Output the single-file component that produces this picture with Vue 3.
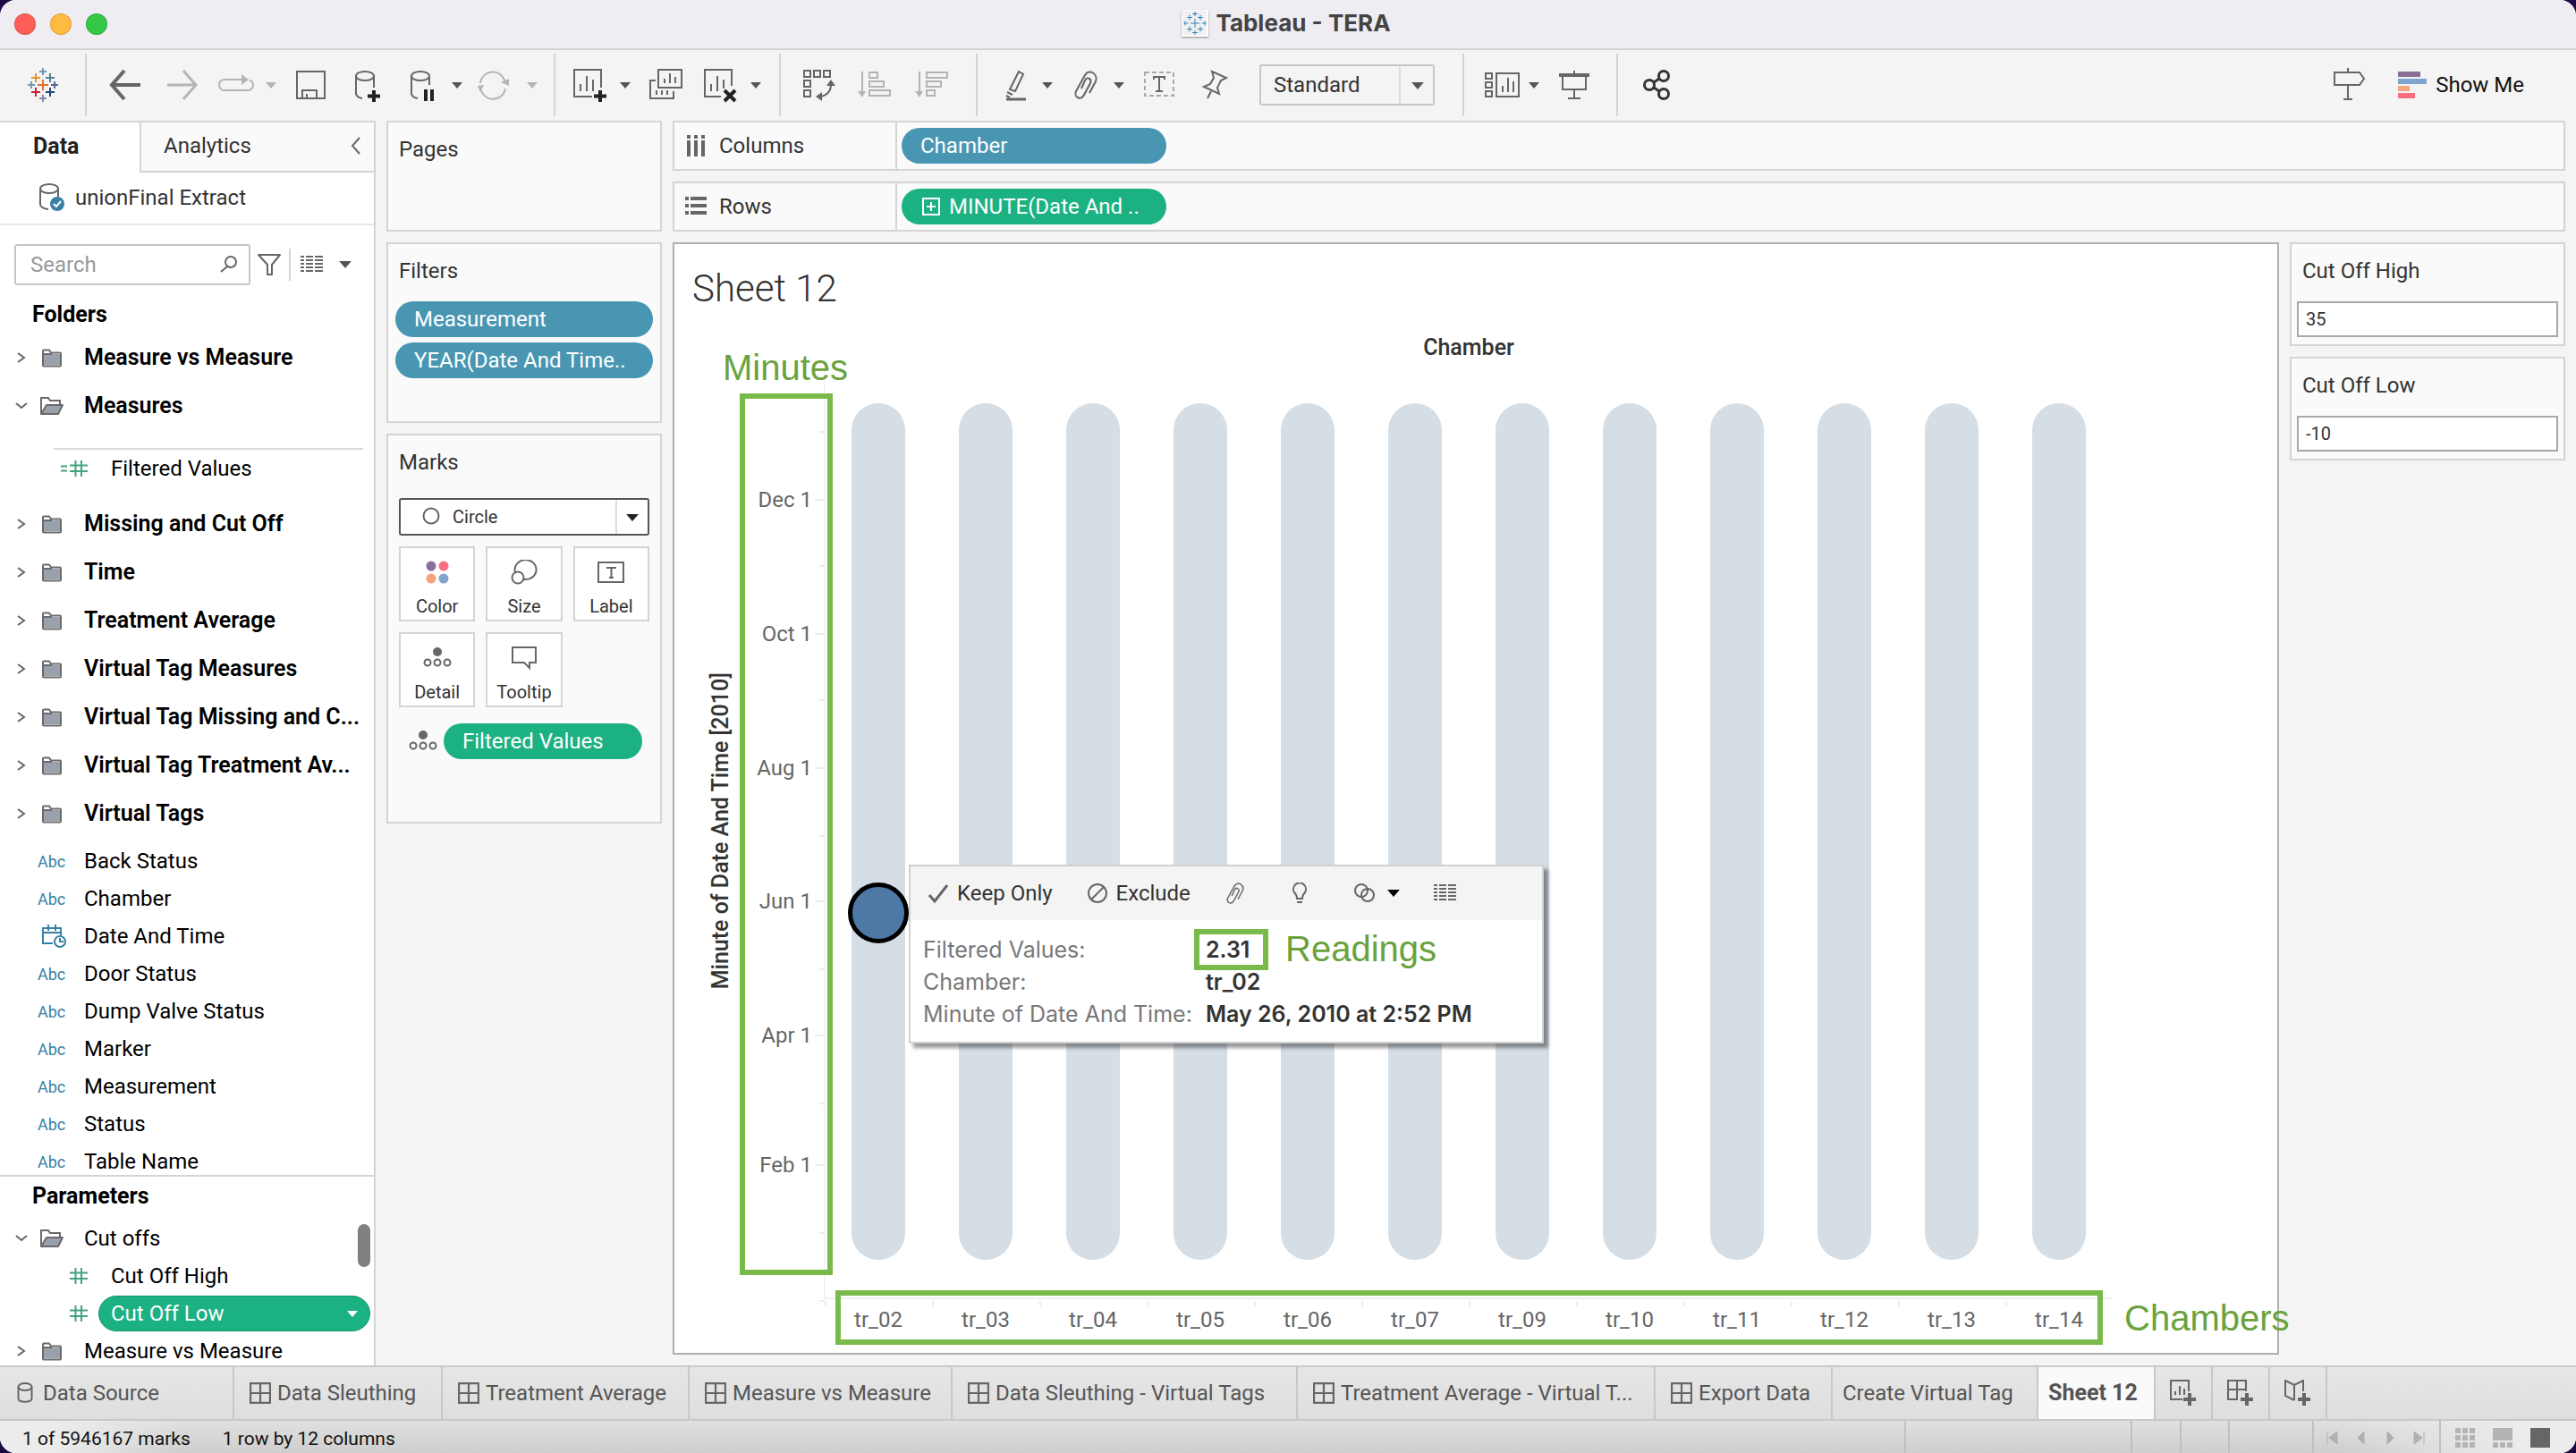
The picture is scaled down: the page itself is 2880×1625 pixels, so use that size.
<script setup>
import { ref } from 'vue'

const folders = [
  { name: 'Missing and Cut Off' },
  { name: 'Time' },
  { name: 'Treatment Average' },
  { name: 'Virtual Tag Measures' },
  { name: 'Virtual Tag Missing and C...' },
  { name: 'Virtual Tag Treatment Av...' },
  { name: 'Virtual Tags' },
]
const fields = [
  { name: 'Back Status', type: 'abc' },
  { name: 'Chamber', type: 'abc' },
  { name: 'Date And Time', type: 'date' },
  { name: 'Door Status', type: 'abc' },
  { name: 'Dump Valve Status', type: 'abc' },
  { name: 'Marker', type: 'abc' },
  { name: 'Measurement', type: 'abc' },
  { name: 'Status', type: 'abc' },
  { name: 'Table Name', type: 'abc' },
]
const chambers = ['tr_02', 'tr_03', 'tr_04', 'tr_05', 'tr_06', 'tr_07', 'tr_09', 'tr_10', 'tr_11', 'tr_12', 'tr_13', 'tr_14']

// Day of the year for every month tick; alternate months carry a label.
const ticks = [
  { day: 365 }, { day: 334, label: 'Dec 1' }, { day: 304 }, { day: 273, label: 'Oct 1' },
  { day: 243 }, { day: 212, label: 'Aug 1' }, { day: 181 }, { day: 151, label: 'Jun 1' },
  { day: 120 }, { day: 90, label: 'Apr 1' }, { day: 59 }, { day: 31, label: 'Feb 1' },
  { day: 0 }, { day: -31 },
]
const axisStart = -31
const axisSpan = 427
const tickTop = (day) => `${(1 - (day - axisStart) / axisSpan) * 100}%`

const tabs = ['Data Sleuthing', 'Treatment Average', 'Measure vs Measure', 'Data Sleuthing - Virtual Tags', 'Treatment Average - Virtual T...', 'Export Data']
const fit = ref('Standard')
const markType = ref('Circle')
const search = ref('')
const cutHigh = ref('35')
const cutLow = ref('-10')

const logoMarks = [
  [20, 20, 6, '#eb6f2c'], [20, 5, 4, '#6f9bb0'], [20, 35, 4, '#8088b0'], [7, 20, 4, '#6f9bb0'], [33, 20, 4, '#5b6591'],
  [12, 12, 5, '#e8912d'], [28, 12, 5, '#4f8498'], [12, 28, 5, '#c72037'], [28, 28, 5, '#1f457e'],
]
</script>

<template>
  <div class="window">
    <svg class="defs" width="0" height="0" aria-hidden="true">
      <symbol id="i-sheet" viewBox="0 0 22 22"><path d="M1 1h20v20H1zM11 1v20M1 11h20" fill="none" stroke="#666" stroke-width="2" /></symbol>
      <symbol id="i-folder" viewBox="0 0 24 22"><path d="M2 7h20v12H2z" fill="#98a1ac" /><path d="M2 19.500V3.500q0-1 1-1h6l2 3h10q1 0 1 1v13q0 1-1 1H3q-1 0-1-1zM2 7h10" fill="none" stroke="#6a6a6a" stroke-width="2" stroke-linejoin="round" /></symbol>
      <symbol id="i-open" viewBox="0 0 28 22"><path d="M2 20V2h8l2 3h11v5" fill="none" stroke="#6a6a6a" stroke-width="2" /><path d="M2 20l6-10h18l-5 10z" fill="#98a1ac" stroke="#6a6a6a" stroke-width="2" stroke-linejoin="round" /></symbol>
      <symbol id="i-right" viewBox="0 0 12 14"><path d="M2 2l7 5-7 5" fill="none" stroke="#666" stroke-width="2" /></symbol>
      <symbol id="i-down" viewBox="0 0 14 10"><path d="M1 2l6 5 6-5" fill="none" stroke="#666" stroke-width="2" /></symbol>
      <symbol id="i-hash" viewBox="0 0 20 20"><path d="M6.500 1v18M13 1v18M0 6.500h20M0 13h20" fill="none" stroke="#42a37c" stroke-width="2" /></symbol>
      <symbol id="i-caret" viewBox="0 0 12 7"><path d="M0 0h12L6 7z" fill="currentColor" /></symbol>
      <symbol id="i-detail" viewBox="0 0 32 24"><circle cx="16" cy="5" r="5" fill="#666" /><g fill="none" stroke="#666" stroke-width="2"><circle cx="5" cy="17" r="3.500" /><circle cx="16" cy="17" r="3.500" /><circle cx="27" cy="17" r="3.500" /></g></symbol>
      <symbol id="i-list" viewBox="0 0 26 20"><g stroke="#666" stroke-width="2"><path v-for="y in [1, 5, 9, 13, 17]" :key="y" :d="`M0 ${y}h4M6 ${y}h8M16 ${y}h9`" /></g></symbol>
      <symbol id="i-clip" viewBox="0 0 40 40"><path d="M24 29l7-13c3-8-7-15-12-7L9 27c-3 7 6 11 9 4l7-13c2-5-4-8-6-3l-4 9" fill="none" stroke="#666" stroke-width="2" /></symbol>
    </svg>

    <header class="titlebar">
      <div class="lights"><button class="red" aria-label="Close"></button><button class="amber" aria-label="Minimise"></button><button class="green" aria-label="Zoom"></button></div>
      <svg class="doc" viewBox="0 0 30 30"><path d="M0 0h30v30H0z" fill="#fff" /><path d="M1 1h27v27H1z" fill="#f1f1f1" /><path d="M15 10v10M10 15h10M15 2v5M12 4.500h6M15 23v5M12 25.500h6M2.500 15h5M4 12.500v5M22.500 15h5M26 12.500v5M9 5.500v6M6 8.500h6M21 5.500v6M18 8.500h6M9 18.500v6M6 21.500h6M21 18.500v6M18 21.500h6" stroke="#2f86bd" fill="none" /></svg>
      <h1>Tableau - TERA</h1>
    </header>

    <nav class="toolbar">
      <div class="group brand"><button class="tool" aria-label="Start page"><svg viewBox="0 0 40 40"><path v-for="(m, i) in logoMarks" :key="i" :d="`M${m[0] - m[2]} ${m[1]}h${m[2] * 2}M${m[0]} ${m[1] - m[2]}v${m[2] * 2}`" :stroke="m[3]" stroke-width="2" /></svg></button></div>

      <div class="group">
        <button class="tool" aria-label="Undo"><svg viewBox="0 0 40 40"><path d="M37 20H5M19 4L5 20l14 16" stroke-width="4" /></svg></button>
        <button class="tool dim" aria-label="Redo"><svg viewBox="0 0 40 40"><path d="M5 20h32M23 4l14 16-14 16" stroke-width="3" /></svg></button>
        <button class="tool dim" aria-label="Replay"><svg viewBox="0 0 40 40"><path d="M27 14H8a6 6 0 0 0-7 6a6 6 0 0 0 7 6h24a6 6 0 0 0 7-6q0-4-4-5" /><path class="solid" d="M26 8l8 6-8 6z" /></svg></button>
        <button class="caret dim" aria-label="Replay options"><svg><use href="#i-caret" /></svg></button>
        <button class="tool" aria-label="Save"><svg viewBox="0 0 40 40"><path d="M4 5h31v30H4zM10 35v-9h16v9M15 35v-5" /></svg></button>
        <button class="tool" aria-label="New data source"><svg viewBox="0 0 40 40"><ellipse cx="18" cy="10" rx="10" ry="5" /><path d="M8 10v20q1 4 7 5M28 10v13" /><path class="ink" d="M28 26v13M21 32.500h14" /></svg></button>
        <button class="tool" aria-label="Pause updates"><svg viewBox="0 0 40 40"><ellipse cx="18" cy="10" rx="10" ry="5" /><path d="M8 10v20q1 4 7 5M28 10v10" /><path class="ink" d="M24 25v13M31 25v13" /></svg></button>
        <button class="caret" aria-label="Pause options"><svg><use href="#i-caret" /></svg></button>
        <button class="tool dim" aria-label="Refresh"><svg viewBox="0 0 40 40"><path d="M1 18a14 14 0 0 1 25-7l3 5M29 24a14 14 0 0 1-25 6l-3-5" /><path class="solid" d="M24 17l9-4v8zM-2 21l7-1-4 8z" /></svg></button>
        <button class="caret dim" aria-label="Refresh options"><svg><use href="#i-caret" /></svg></button>
      </div>

      <div class="group near">
        <button class="tool" aria-label="New worksheet"><svg viewBox="0 0 40 40"><path d="M22 33H2V3h30v20M9 27v-8M16 27V10M23 27V14" /><path class="ink" d="M31 26v13M24 32.500h14" /></svg></button>
        <button class="caret" aria-label="New worksheet options"><svg><use href="#i-caret" /></svg></button>
        <button class="tool" aria-label="Duplicate"><svg viewBox="0 0 40 40"><path d="M12 3h26v20H12zM19 18v-5M25 18V7M31 18v-7M9 15H3v20h26v-8M10 26v5M16 26v5M22 26v5" /></svg></button>
        <button class="tool" aria-label="Clear sheet"><svg viewBox="0 0 40 40"><path d="M20 33H2V3h30v18M9 27v-8M16 27V10M23 24V14" /><path class="ink" d="M24 26l12 12M36 26L24 38" /></svg></button>
        <button class="caret" aria-label="Clear options"><svg><use href="#i-caret" /></svg></button>
      </div>

      <div class="group">
        <button class="tool" aria-label="Swap rows and columns"><svg viewBox="0 0 40 40"><path d="M3 4h7v7H3zM14 4h7v7h-7zM25 4h7v7h-7zM3 15h7v7H3zM3 26h7v7H3zM33 19q0 12-12 14" /><path class="solid" d="M28 21l5-7 5 7zM23 28v10l-7-5z" /></svg></button>
        <button class="tool dim" aria-label="Sort ascending"><svg viewBox="0 0 40 40"><path d="M6 5v24M14 6h9v6h-9zM14 16h16v6H14zM14 26h23v6H14z" /><path class="solid" d="M1 27h9l-4 7z" /></svg></button>
        <button class="tool dim" aria-label="Sort descending"><svg viewBox="0 0 40 40"><path d="M8 5v24M16 6h23v6H16zM16 16h16v6H16zM16 26h9v6h-9z" /><path class="solid" d="M3 27h9l-4 7z" /></svg></button>
      </div>

      <div class="group tight">
        <button class="tool" aria-label="Highlight"><svg viewBox="0 0 40 40"><path d="M23 5l5 3-9 19-6-2zM10 28l6 3M9 32l4 2" /><path d="M9 36h22" stroke-width="3" /></svg></button>
        <button class="caret" aria-label="Highlight options"><svg><use href="#i-caret" /></svg></button>
        <button class="tool" aria-label="Group members"><svg viewBox="2 0 40 40"><use href="#i-clip" width="40" height="40" /></svg></button>
        <button class="caret" aria-label="Group options"><svg><use href="#i-caret" /></svg></button>
        <button class="tool" aria-label="Show mark labels"><svg viewBox="0 0 40 40"><path d="M4 6h32v26H4z" stroke-dasharray="5 3" stroke="#aaa" /><path d="M14 14v-3h12v3M20 11v16M16 27h8" /></svg></button>
        <button class="tool" aria-label="Fix axes"><svg viewBox="-4 0 40 40"><path d="M16 5l16 7-6 3-4 8 2 7L7 22l7-3 4-7zM15 27l-4 8" /></svg></button>
        <div class="fit"><select v-model="fit" aria-label="Fit"><option>Standard</option></select><svg><use href="#i-caret" /></svg></div>
      </div>

      <div class="group tight">
        <button class="tool" aria-label="Show cards"><svg viewBox="0 0 40 40"><path d="M1 7h7v6H1zM1 17h7v6H1zM1 27h7v6H1zM13 7h25v26H13zM20 28v-7M26 28V12M32 28V16" /></svg></button>
        <button class="caret" aria-label="Card options"><svg><use href="#i-caret" /></svg></button>
        <button class="tool" aria-label="Presentation mode"><svg viewBox="0 0 40 40"><path d="M7 10v15h26V10M20 4v4M20 25v10M13 35h14" /><path d="M3 9h34" stroke-width="4" /></svg></button>
      </div>

      <div class="group">
        <button class="tool" aria-label="Share"><svg class="dark" viewBox="0 0 40 40"><circle cx="12" cy="20" r="5.500" /><circle cx="28" cy="10" r="5.500" /><circle cx="28" cy="30" r="5.500" /><path d="M17 17l6-4M17 23l6 4" /></svg></button>
      </div>

      <div class="help">
        <button class="tool" aria-label="Guide"><svg viewBox="0 0 40 40"><path d="M3 6h28l5 7-5 7H3zM18 1v5M18 20v16M13 36h10" /></svg></button>
        <button class="showme"><svg viewBox="0 0 32 32"><path d="M0 1h25v6H0z" fill="#8a6f98" /><path d="M0 9h32v6H0z" fill="#80a4cd" /><path d="M0 17h13v6H0z" fill="#f4a57c" /><path d="M0 25h19v6H0z" fill="#fa6f80" /></svg>Show Me</button>
      </div>
    </nav>

    <main class="body">
      <aside class="sidebar">
        <div class="side-tabs"><button class="on">Data</button><button>Analytics<svg viewBox="0 0 12 20"><path d="M11 1L3 10l8 9" fill="none" stroke="#666" stroke-width="2" /></svg></button></div>
        <div class="source"><svg viewBox="0 0 28 34"><g fill="none" stroke="#666" stroke-width="2"><ellipse cx="11" cy="7" rx="10" ry="5" /><path d="M1 7v18q1 4 9 5M21 7v9" /></g><circle cx="20" cy="24" r="8" fill="#3880a6" /><path d="M16 24l3 3 5-6" fill="none" stroke="#fff" stroke-width="2" /></svg>unionFinal Extract</div>
        <div class="search">
          <label><input v-model="search" placeholder="Search" aria-label="Search" /><svg viewBox="0 0 20 20"><circle cx="12" cy="7" r="6" fill="none" stroke="#666" stroke-width="2" /><path d="M8 12l-7 6" stroke="#666" stroke-width="2" /></svg></label>
          <button aria-label="Filter fields"><svg class="funnel" viewBox="0 0 26 26"><path d="M1 2h24L16 13v11h-5V13z" fill="none" stroke="#666" stroke-width="2" stroke-linejoin="round" /></svg></button>
          <button class="view" aria-label="View as"><svg class="lines"><use href="#i-list" /></svg><svg class="arrow"><use href="#i-caret" /></svg></button>
        </div>

        <section class="pane">
          <h2>Folders</h2>
          <ul>
            <li class="row tall"><svg class="chev"><use href="#i-right" /></svg><svg class="fold"><use href="#i-folder" /></svg>Measure vs Measure</li>
            <li class="row tall"><svg class="chev"><use href="#i-down" /></svg><svg class="fold open"><use href="#i-open" /></svg>Measures</li>
            <li class="nest"><div class="row sub"><span class="hash"><svg class="eq" viewBox="0 0 8 20"><path d="M0 7.500h7M0 12.500h7" stroke="#42a37c" stroke-width="2" /></svg><svg><use href="#i-hash" /></svg></span>Filtered Values</div></li>
            <li v-for="f in folders" :key="f.name" class="row tall"><svg class="chev"><use href="#i-right" /></svg><svg class="fold"><use href="#i-folder" /></svg>{{ f.name }}</li>
          </ul>
          <ul class="fields">
            <li v-for="f in fields" :key="f.name" class="row">
              <span v-if="f.type === 'abc'" class="abc">Abc</span>
              <svg v-else class="cal" viewBox="0 0 30 28"><g fill="none" stroke="#3880a6" stroke-width="2"><path d="M13 22H2V5h20v8M2 10h20M8 1v7M16 1v7" /><circle cx="21" cy="20" r="6" /><path d="M21 16v4h4" /></g></svg>{{ f.name }}
            </li>
          </ul>
        </section>

        <section class="pane params">
          <h2>Parameters</h2>
          <ul>
            <li class="row"><svg class="chev"><use href="#i-down" /></svg><svg class="fold open"><use href="#i-open" /></svg>Cut offs</li>
            <li class="row sub"><span class="hash"><svg><use href="#i-hash" /></svg></span>Cut Off High</li>
            <li class="row sub"><span class="hash"><svg><use href="#i-hash" /></svg></span><button class="picked">Cut Off Low<svg><use href="#i-caret" /></svg></button></li>
            <li class="row"><svg class="chev"><use href="#i-right" /></svg><svg class="fold"><use href="#i-folder" /></svg>Measure vs Measure</li>
          </ul>
          <span class="thumb"></span>
        </section>
      </aside>

      <div class="cards">
        <section class="card pages"><h3>Pages</h3></section>
        <section class="card filters"><h3>Filters</h3><button class="pill">Measurement</button><button class="pill">YEAR(Date And Time..</button></section>
        <section class="card marks">
          <h3>Marks</h3>
          <div class="mark-type"><svg class="ring" viewBox="0 0 20 20"><circle cx="10" cy="10" r="8.500" fill="none" stroke="#666" stroke-width="2" /></svg><select v-model="markType" aria-label="Mark type"><option>Circle</option></select><svg class="drop"><use href="#i-caret" /></svg></div>
          <div class="encodings">
            <button><svg viewBox="0 0 32 28"><circle cx="9" cy="7" r="5.500" fill="#8a6f98" /><circle cx="23" cy="7" r="5.500" fill="#fa6f80" /><circle cx="9" cy="21" r="5.500" fill="#f4a57c" /><circle cx="23" cy="21" r="5.500" fill="#80a4cd" /></svg>Color</button>
            <button><svg viewBox="0 0 32 28"><g fill="none" stroke="#666" stroke-width="2"><path d="M6 14a12 11 0 1 1 10 8" /><circle cx="9" cy="20" r="6.500" /></g></svg>Size</button>
            <button><svg viewBox="0 0 32 28"><g fill="none" stroke="#666" stroke-width="2"><path d="M2 3h28v22H2z" /><path d="M12 10V9h9v1M16.500 9v11M14 20h5" /></g></svg>Label</button>
            <button><svg viewBox="0 0 32 24"><use href="#i-detail" /></svg>Detail</button>
            <button><svg viewBox="0 0 32 28"><path d="M3 2h26v17h-7v6l-6-6H3z" fill="none" stroke="#666" stroke-width="2" /></svg>Tooltip</button>
          </div>
          <div class="encoded"><svg><use href="#i-detail" /></svg><button class="pill go">Filtered Values</button></div>
        </section>
      </div>

      <div class="work">
        <div class="shelf"><div class="name"><svg viewBox="0 0 24 24"><path d="M2 0h4v4H2zM10 0h4v4h-4zM18 0h4v4h-4zM2 6h4v18H2zM10 6h4v18h-4zM18 6h4v18h-4z" fill="#666" /></svg>Columns</div><button class="pill">Chamber</button></div>
        <div class="shelf"><div class="name"><svg viewBox="0 0 24 24"><path d="M0 1h4v4H0zM6 1h18v4H6zM0 9h4v4H0zM6 9h18v4H6zM0 17h4v4H0zM6 17h18v4H6z" fill="#666" /></svg>Rows</div><button class="pill go"><svg viewBox="0 0 20 20"><path d="M1 1h18v18H1zM10 5v10M5 10h10" fill="none" stroke="#fff" stroke-width="2" /></svg>MINUTE(Date And ..</button></div>

        <div class="stage">
          <section class="sheet">
            <h2>Sheet 12</h2>
            <div class="chart">
              <div class="col-title">Chamber</div>
              <div class="row-title"><span>Minute of Date And Time [2010]</span></div>
              <div class="y-axis">
                <span v-for="t in ticks" :key="t.day" class="tick" :class="{ major: t.label }" :style="{ top: tickTop(t.day) }">{{ t.label }}</span>
                <span class="note minutes">Minutes</span>
                <span class="frame tall-frame"></span>
              </div>
              <div class="plot">
                <div v-for="c in chambers" :key="c" class="band"><span></span></div>
                <span class="point"></span>
                <div class="tip">
                  <div class="tip-bar">
                    <button><svg viewBox="0 0 24 24"><path d="M2 14l6 7L22 3" fill="none" stroke="#666" stroke-width="3" /></svg>Keep Only</button>
                    <button><svg viewBox="0 0 24 24"><g fill="none" stroke="#666" stroke-width="2"><circle cx="12" cy="12" r="10" /><path d="M5 19L19 5" /></g></svg>Exclude</button>
                    <button aria-label="Group"><svg viewBox="4 4 32 32"><use href="#i-clip" width="40" height="40" /></svg></button>
                    <button aria-label="Explain"><svg viewBox="0 0 24 24"><path d="M9 18q0-4-3-7a7 7 0 1 1 12 0q-3 3-3 7zM9 22h6" fill="none" stroke="#666" stroke-width="2" /></svg></button>
                    <button class="sets" aria-label="Create set"><svg viewBox="0 0 24 24"><g fill="none" stroke="#666" stroke-width="2"><circle cx="9" cy="9" r="7" /><circle cx="16" cy="14" r="7" /></g></svg><svg class="arrow"><use href="#i-caret" /></svg></button>
                    <button aria-label="View data"><svg class="lines"><use href="#i-list" /></svg></button>
                  </div>
                  <dl>
                    <dt>Filtered Values:</dt><dd><span class="boxed">2.31<span class="note readings">Readings</span></span></dd>
                    <dt>Chamber:</dt><dd>tr_02</dd>
                    <dt>Minute of Date And Time:</dt><dd>May 26, 2010 at 2:52 PM</dd>
                  </dl>
                </div>
              </div>
              <div class="x-axis">
                <span v-for="c in chambers" :key="c">{{ c }}</span>
                <span class="frame wide-frame"></span>
                <span class="note chambers">Chambers</span>
              </div>
            </div>
          </section>

          <div class="controls">
            <section class="card"><label for="high">Cut Off High</label><input id="high" v-model="cutHigh" /></section>
            <section class="card"><label for="low">Cut Off Low</label><input id="low" v-model="cutLow" /></section>
          </div>
        </div>
      </div>
    </main>

    <nav class="tabs">
      <button class="src"><svg class="db" viewBox="0 0 18 24"><g fill="none" stroke="#666" stroke-width="2"><ellipse cx="9" cy="5" rx="7.500" ry="4" /><path d="M1.500 5v13c0 5 15 5 15 0V5" /></g></svg>Data Source</button>
      <button v-for="t in tabs" :key="t"><svg><use href="#i-sheet" /></svg>{{ t }}</button>
      <button class="plain">Create Virtual Tag</button>
      <button class="plain active">Sheet 12</button>
      <button class="add" aria-label="New worksheet"><svg viewBox="0 0 30 30"><path d="M14 22H1V1h20v12M6 17v-4M11 17V7M16 17v-7" /><path d="M22 15v14M15 22h14" stroke-width="4" /></svg></button>
      <button class="add" aria-label="New dashboard"><svg viewBox="0 0 30 30"><path d="M12 22H1V1h20v12M11 1v21M1 11h20" /><path d="M22 15v14M15 22h14" stroke-width="4" /></svg></button>
      <button class="add" aria-label="New story"><svg viewBox="0 0 30 30"><path d="M11 23L1 18V1l10 5 10-5v12M11 6v17" /><path d="M22 15v14M15 22h14" stroke-width="4" /></svg></button>
    </nav>

    <footer class="status">
      <div class="counts"><span>1 of 5946167 marks</span><span>1 row by 12 columns</span></div>
      <div></div><div></div><div></div><div></div>
      <div class="pager">
        <button aria-label="First"><svg viewBox="0 0 14 16"><path d="M1 1v14M12 1v14L3 8z" /></svg></button>
        <button aria-label="Previous"><svg viewBox="0 0 14 16"><path d="M10 1v14L3 8z" /></svg></button>
        <button aria-label="Next"><svg viewBox="0 0 14 16"><path d="M4 1v14l7-7z" /></svg></button>
        <button aria-label="Last"><svg viewBox="0 0 14 16"><path d="M13 1v14M2 1v14l9-7z" /></svg></button>
      </div>
      <div class="modes">
        <button aria-label="Sheet sorter"><svg viewBox="0 0 22 22"><path d="M0 0h6v6H0zM8 0h6v6H8zM16 0h6v6h-6zM0 8h6v6H0zM8 8h6v6H8zM16 8h6v6h-6zM0 16h6v6H0zM8 16h6v6H8zM16 16h6v6h-6z" fill="#b4b4b4" /></svg></button>
        <button aria-label="Filmstrip"><svg viewBox="0 0 22 22"><path d="M0 0h22v14H0zM0 16h6v6H0zM8 16h6v6H8zM16 16h6v6h-6z" fill="#b4b4b4" /></svg></button>
        <button aria-label="Tabs"><svg viewBox="0 0 22 22"><path d="M0 0h22v22H0z" fill="#666" /></svg></button>
      </div>
    </footer>
  </div>
</template>

<style>
html, body { margin: 0; background: #1d0a45; }
</style>

<style scoped>
* { box-sizing: border-box; }
.window { display: flex; flex-direction: column; height: 100vh; overflow: hidden; border-radius: 18px; background: #f4f4f4; font: 24px/32px Roboto, "Liberation Sans", sans-serif; color: #333; }
.defs { position: absolute; }
button, input, select { font: inherit; color: inherit; border: 0; padding: 0; background: none; margin: 0; }
button { display: flex; align-items: center; text-align: left; white-space: nowrap; }
h1, h2, h3, ul, dl, dd { margin: 0; padding: 0; font-weight: 400; }
ul { list-style: none; }
svg { display: block; flex: none; }

.titlebar { position: relative; flex: none; display: flex; align-items: center; justify-content: center; gap: 8px; height: 56px; padding: 0 4px 2px 0; border-bottom: 2px solid #d3d2d6; background: #efedf2; }
.titlebar h1 { font: 700 26px/32px Inter, Roboto, sans-serif; color: #444; }
.doc { width: 30px; height: 30px; box-shadow: 0 1px 2px #888; }
.lights { position: absolute; left: 16px; top: 15px; display: flex; gap: 16px; }
.lights button { width: 24px; height: 24px; border-radius: 50%; border: 1px solid #0002; }
.red { background: #fe5f57; }
.amber { background: #febb40; }
.green { background: #34c748; }

.toolbar { flex: none; display: grid; grid-template-columns: 95px 524px 252px 220px 544px 172px 90px 1fr; height: 79px; padding: 4px 0 5px; }
.group { display: flex; align-items: center; gap: 22px; padding-left: 23px; border-left: 2px solid #d4d4d4; }
.group.near { padding-left: 19px; }
.group.brand { border: 0; padding-left: 28px; }
.group.tight { gap: 19px; }
.tool, .tool svg { width: 40px; height: 40px; flex: none; }
.tool svg { fill: none; stroke: #666; stroke-width: 2; color: #666; overflow: visible; }
.tool svg .solid { fill: #666; stroke: none; }
.tool svg .ink { stroke: #222; stroke-width: 4; }
.tool svg.dark { stroke: #333; stroke-width: 3; }
.tool.dim svg { stroke: #b4b4b4; }
.tool.dim svg .solid { fill: #b4b4b4; }
.caret { width: 22px; margin-left: -22px; justify-content: center; overflow: visible; color: #555; padding-left: 16px; }
.group.tight .caret { margin-left: -20px; padding-left: 10px; }
.caret.dim { color: #b4b4b4; }
.caret svg { width: 12px; height: 7px; }
.fit { position: relative; width: 196px; height: 46px; margin-left: 14px; }
.fit select { width: 100%; height: 100%; appearance: none; border: 2px solid #c6c6c6; border-radius: 3px; padding-left: 14px; background: linear-gradient(to left, transparent 36px, #ddd 36px, #ddd 38px, transparent 38px); color: #333; }
.fit svg { position: absolute; right: 12px; top: 20px; width: 14px; height: 8px; color: #555; pointer-events: none; }
.help { display: flex; align-items: center; justify-content: flex-end; gap: 34px; padding-right: 58px; }
.showme { gap: 10px; color: #111; }
.showme svg { width: 32px; height: 32px; }

.body { flex: 1; min-height: 0; display: flex; gap: 12px; padding-right: 12px; }
.sidebar { width: 420px; flex: none; display: flex; flex-direction: column; background: #fff; border-right: 2px solid #d4d4d4; border-top: 2px solid #d4d4d4; color: #000; }
.side-tabs { flex: none; display: flex; height: 56px; }
.side-tabs button { flex: 1; padding-left: 25px; padding-right: 15px; padding-bottom: 2px; justify-content: space-between; background: #fafafa; border-left: 2px solid #d4d4d4; border-bottom: 2px solid #d4d4d4; color: #333; }
.side-tabs .on { flex: 0 0 156px; padding-left: 37px; border: 0; background: #fff; font-size: 25px; font-weight: 700; color: #222; }
.side-tabs svg { width: 12px; height: 20px; }
.source { flex: none; display: flex; align-items: center; gap: 12px; height: 59px; padding-left: 44px; padding-bottom: 2px; border-bottom: 2px solid #e6e6e6; color: #333; }
.source svg { width: 28px; height: 34px; }
.search { flex: none; display: flex; align-items: center; height: 77px; padding: 11px 24px 0 16px; gap: 8px; }
.search label { display: flex; align-items: center; width: 264px; height: 46px; padding: 0 12px 0 16px; border: 2px solid #c6c6c6; border-radius: 3px; }
.search input { flex: 1; min-width: 0; outline: 0; }
.search input::placeholder { color: #999; opacity: 1; }
.search label svg { width: 20px; height: 20px; }
.funnel { width: 26px; height: 26px; }
.view { height: 36px; margin-left: 1px; border-left: 2px solid #d4d4d4; padding-left: 11px; gap: 17px; }
.lines { width: 26px; height: 20px; }
.arrow { width: 14px; height: 8px; color: #555; }

.pane { flex: 1; min-height: 0; overflow: hidden; }
.pane h2 { font-size: 25px; font-weight: 700; line-height: 46px; height: 44px; padding-left: 36px; }
.row { position: relative; display: flex; align-items: center; height: 42px; padding-left: 94px; white-space: nowrap; }
.row.tall { height: 54px; font-size: 25px; font-weight: 600; }
.row.sub { padding-left: 124px; }
.chev { position: absolute; left: 17px; width: 14px; height: 14px; }
.fold { position: absolute; left: 46px; width: 24px; height: 22px; }
.fold.open { left: 44px; width: 28px; }
.nest { height: 78px; padding-top: 20px; }
.nest::before { content: ""; display: block; height: 2px; margin: 0 12px 0 60px; background: #d9d9d9; }
.hash { position: absolute; left: 68px; width: 30px; display: flex; justify-content: flex-end; gap: 2px; }
.hash svg { width: 20px; height: 20px; }
.hash .eq { width: 8px; }
.fields { padding-top: 5px; }
.abc { position: absolute; left: 42px; top: 6px; font-size: 18px; font-weight: 400; color: #3880a6; }
.cal { position: absolute; left: 46px; width: 30px; height: 28px; }
.params { position: relative; flex: 0 0 213px; border-top: 2px solid #d4d4d4; }
.params h2 { line-height: 44px; height: 42px; margin-bottom: 6px; }
.picked { position: absolute; left: 110px; right: 4px; top: 1px; height: 40px; padding: 0 13px; justify-content: space-between; border-radius: 20px; border: 1px solid #119565; background: #1cb182; color: #fff; }
.picked svg { width: 12px; height: 7px; }
.thumb { position: absolute; right: 4px; top: 53px; width: 14px; height: 48px; border-radius: 7px; background: #808080; }

.cards { width: 308px; flex: none; display: flex; flex-direction: column; gap: 12px; }
.card { border: 2px solid #d4d4d4; background: #fafafa; }
.card h3 { font-size: 24px; padding: 14px 0 0 12px; }
.pages { height: 124px; }
.filters { height: 202px; }
.marks { height: 436px; }
.pill { height: 40px; padding-left: 21px; border-radius: 20px; background: #4996b2; color: #fff; }
.pill.go { background: #1cb182; }
.filters .pill { width: 288px; margin: 0 8px 6px; }
.filters h3 { padding-bottom: 18px; }
.mark-type { position: relative; height: 42px; margin: 24px 12px 12px; font-size: 20px; }
.mark-type select { width: 100%; height: 100%; appearance: none; padding-left: 58px; border: 2px solid #555; border-radius: 3px; background: linear-gradient(to left, transparent 34px, #ddd 34px, #ddd 36px, transparent 36px) #fff; }
.ring { position: absolute; left: 26px; top: 10px; width: 20px; height: 20px; }
.drop { position: absolute; right: 12px; top: 18px; width: 14px; height: 8px; color: #222; pointer-events: none; }
.encodings { display: grid; grid-template-columns: repeat(3, 1fr); grid-auto-rows: 84px; gap: 12px; margin: 0 12px; font-size: 20px; }
.encodings button { flex-direction: column; justify-content: flex-end; gap: 9px; border: 2px solid #d4d4d4; background: #fff; line-height: 30px; }
.encodings svg { width: 32px; height: 28px; }
.encoded { display: flex; align-items: center; gap: 7px; margin: 18px 20px 0 23px; }
.encoded svg { width: 32px; height: 24px; }
.encoded .pill { width: 222px; }

.work { flex: 1; min-width: 0; display: flex; flex-direction: column; gap: 12px; padding-bottom: 12px; }
.shelf { flex: none; display: flex; align-items: center; height: 56px; border: 2px solid #d4d4d4; background: #fafafa; }
.name { display: flex; align-items: center; gap: 14px; align-self: stretch; width: 249px; padding-left: 12px; border-right: 2px solid #d4d4d4; }
.name svg { width: 24px; height: 24px; }
.shelf .pill { width: 296px; margin-left: 5px; gap: 10px; }
.shelf .pill.go { padding-left: 23px; }
.shelf .pill svg { width: 20px; height: 20px; }

.stage { flex: 1; min-height: 0; display: flex; gap: 12px; }
.sheet { flex: 1; min-width: 0; display: flex; flex-direction: column; border: 2px solid #b0b0b0; background: #fff; }
.sheet h2 { font-size: 42px; font-weight: 300; line-height: 100px; padding-left: 20px; }
.chart { flex: 1; min-height: 0; display: grid; grid-template-columns: 73px 95px 1440px; grid-template-rows: 32px 1fr 46px; padding-bottom: 14px; color: #666; }
.col-title { grid-column: 3; text-align: center; font-size: 25px; font-weight: 500; color: #333; }
.row-title { grid-column: 1; display: flex; align-items: center; justify-content: flex-end; padding-right: 5px; font-size: 25px; font-weight: 500; color: #333; }
.row-title span { writing-mode: vertical-rl; rotate: 180deg; white-space: nowrap; }
.y-axis { position: relative; border-right: 1px solid #ececec; }
.tick { position: absolute; right: 0; display: flex; align-items: center; gap: 3px; height: 32px; margin-top: -14px; }
.tick::after { content: ""; width: 5px; height: 2px; background: #ececec; }
.tick.major::after { width: 10px; }
.plot { position: relative; display: flex; border-bottom: 2px solid #f0f0f0; }
.band { flex: 1; display: flex; justify-content: center; padding: 46px 0 42px; }
.band span { width: 60px; border-radius: 30px; background: #d5dde5; }
.x-axis { grid-column: 3; position: relative; display: flex; line-height: 46px; text-align: center; }
.x-axis > span:not(.frame, .note) { flex: 1; background: linear-gradient(#ececec, #ececec) 0 2px / 2px 6px no-repeat; }
.frame { position: absolute; border: 6px solid #7aba4a; }
.tall-frame { left: 0; width: 104px; top: 35px; bottom: 27px; }
.wide-frame { left: 12px; right: 11px; top: -10px; height: 61px; }
.note { position: absolute; font: 40px/46px "Liberation Sans", Arial, sans-serif; color: #6aa23c; white-space: nowrap; }
.minutes { left: -19px; top: -17px; }
.chambers { left: 1453px; top: -2px; }
.point { position: absolute; left: 26px; top: 582px; width: 68px; height: 68px; border-radius: 50%; border: 5px solid #000; background: #4e79a7; }

.tip { position: absolute; left: 94px; top: 562px; width: 710px; height: 200px; border: 2px solid #d0d0d0; background: #fff; box-shadow: 5px 5px 4px #0006; color: #333; }
.tip-bar { display: flex; align-items: center; height: 60px; padding-left: 19px; gap: 38px; background: #f4f4f4; }
.tip-bar button { gap: 9px; }
.tip-bar svg { width: 24px; height: 24px; }
.tip-bar .sets { gap: 14px; }
.tip-bar .lines { width: 26px; height: 20px; }
.tip-bar .arrow { width: 14px; height: 8px; color: #000; }
.tip-bar button[aria-label] { min-width: 34px; }
.tip dl { display: grid; grid-template-columns: 316px 1fr; grid-auto-rows: 36px; align-items: center; padding: 15px 0 0 14px; font-family: Inter, Roboto, sans-serif; font-size: 25px; }
dt { color: #787878; white-space: nowrap; }
dd { font-weight: 600; }
.boxed { position: relative; margin: 0 -13px; padding: 2px 15px 2px 7px; border: 6px solid #7aba4a; }
.readings { left: 96px; top: -7px; font-weight: 400; }

.controls { width: 308px; flex: none; display: flex; flex-direction: column; gap: 12px; }
.controls .card { display: flex; flex-direction: column; height: 116px; padding: 14px 6px 0 6px; }
.controls label { padding-left: 6px; margin-bottom: 18px; }
.controls input { width: 100%; height: 40px; padding-left: 8px; border: 2px solid #a8a8a8; background: #fff; font-size: 20px; }

.tabs { flex: none; display: grid; grid-template-columns: 262px 233px 276px 294px 386px 400px 198px 230px 131px 64px 64px 64px 1fr; height: 62px; border-top: 2px solid #cacaca; border-bottom: 2px solid #c8c8c8; background: linear-gradient(#e6e6e6, #dedede); color: #555; }
.tabs button { gap: 7px; padding-left: 17px; border-right: 2px solid #c8c8c8; }
.tabs .src { gap: 11px; padding-left: 19px; }
.tabs svg { width: 24px; height: 24px; }
.tabs .db { width: 18px; height: 24px; }
.tabs .plain { padding-left: 11px; }
.tabs .active { background: #fafafa; font-size: 25px; font-weight: 700; }
.tabs .add { justify-content: center; padding: 0; }
.tabs .add svg { width: 30px; height: 30px; fill: none; stroke: #666; stroke-width: 2; }
.status { flex: none; display: grid; grid-template-columns: 1fr 253px 55px 54px 94px 142px 153px; height: 36px; background: radial-gradient(circle at 0 50%, #ececec 60px, transparent 200px), radial-gradient(circle at 100% 50%, #ececec 60px, transparent 260px), linear-gradient(#e0e0e0, #cecece); font-size: 21px; line-height: 32px; color: #111; }
.status > div + div { border-left: 2px solid #c0c0c0; }
.counts { display: flex; gap: 36px; padding: 4px 0 0 25px; }
.pager, .modes { display: flex; align-items: center; padding-top: 2px; }
.pager { gap: 18px; padding-left: 14px; }
.pager svg { width: 14px; height: 16px; fill: #b0b0b0; stroke: #b0b0b0; }
.modes { gap: 20px; padding-left: 16px; }
.modes svg { width: 22px; height: 22px; }
</style>
